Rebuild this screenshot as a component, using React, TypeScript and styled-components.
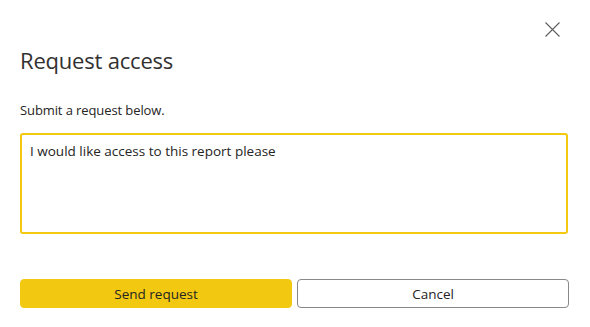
import React from 'react';
import styled, { createGlobalStyle } from 'styled-components';

const GlobalStyle = createGlobalStyle`
  html, body {
    margin: 0;
    padding: 0;
    background: #ffffff;
  }
  body {
    font-family: 'Open Sans', 'Noto Sans', sans-serif;
    color: #252423;
  }
`;

const Dialog = styled.div`
  width: 590px;
  height: 327px;
  box-sizing: border-box;
  padding: 15px 22px 0 20px;
  display: flex;
  flex-direction: column;
`;

const TopBar = styled.div`
  display: flex;
  justify-content: flex-end;
  height: 28px;
`;

const CloseButton = styled.button`
  width: 28px;
  height: 28px;
  margin-right: 2px;
  border: none;
  background: none;
  padding: 0;
  display: flex;
  align-items: center;
  justify-content: center;
  cursor: pointer;
`;

const Title = styled.h1`
  margin: 0;
  margin-top: 2px;
  font-size: 22px;
  font-weight: 400;
  line-height: 30px;
  color: #323130;
  letter-spacing: -0.2px;
`;

const Label = styled.div`
  margin-top: 25px;
  font-size: 13px;
  letter-spacing: -0.1px;
  line-height: 20px;
  color: #252423;
`;

const TextArea = styled.textarea`
  margin-top: 13px;
  height: 101px;
  box-sizing: border-box;
  border: 2px solid #f2c811;
  border-radius: 3px;
  padding: 6px 8px;
  font-family: 'Open Sans', 'Noto Sans', sans-serif;
  font-size: 13.5px;
  line-height: 20px;
  color: #252423;
  resize: none;
  outline: none;
`;

const Actions = styled.div`
  margin-top: 45px;
  display: flex;
  gap: 5px;
  margin-right: -1px;
`;

const ActionButton = styled.button<{ $primary?: boolean }>`
  flex: 1;
  height: 29px;
  box-sizing: border-box;
  border-radius: 4px;
  border: 1px solid ${p => (p.$primary ? '#f2c811' : '#8a8886')};
  background: ${p => (p.$primary ? '#f2c811' : '#ffffff')};
  color: #252423;
  font-family: 'Open Sans', 'Noto Sans', sans-serif;
  font-size: 13.5px;
  cursor: pointer;
`;

export default function App() {
  return (
    <>
      <GlobalStyle />
      <Dialog>
        <TopBar>
          <CloseButton aria-label="Close">
            <svg width="15" height="15" viewBox="0 0 15 15">
              <path d="M0.5 0.5 L14.5 14.5 M14.5 0.5 L0.5 14.5" stroke="#605e5c" strokeWidth="1.1" fill="none" />
            </svg>
          </CloseButton>
        </TopBar>
        <Title>Request access</Title>
        <Label>Submit a request below.</Label>
        <TextArea defaultValue="I would like access to this report please" />
        <Actions>
          <ActionButton $primary>Send request</ActionButton>
          <ActionButton>Cancel</ActionButton>
        </Actions>
      </Dialog>
    </>
  );
}
